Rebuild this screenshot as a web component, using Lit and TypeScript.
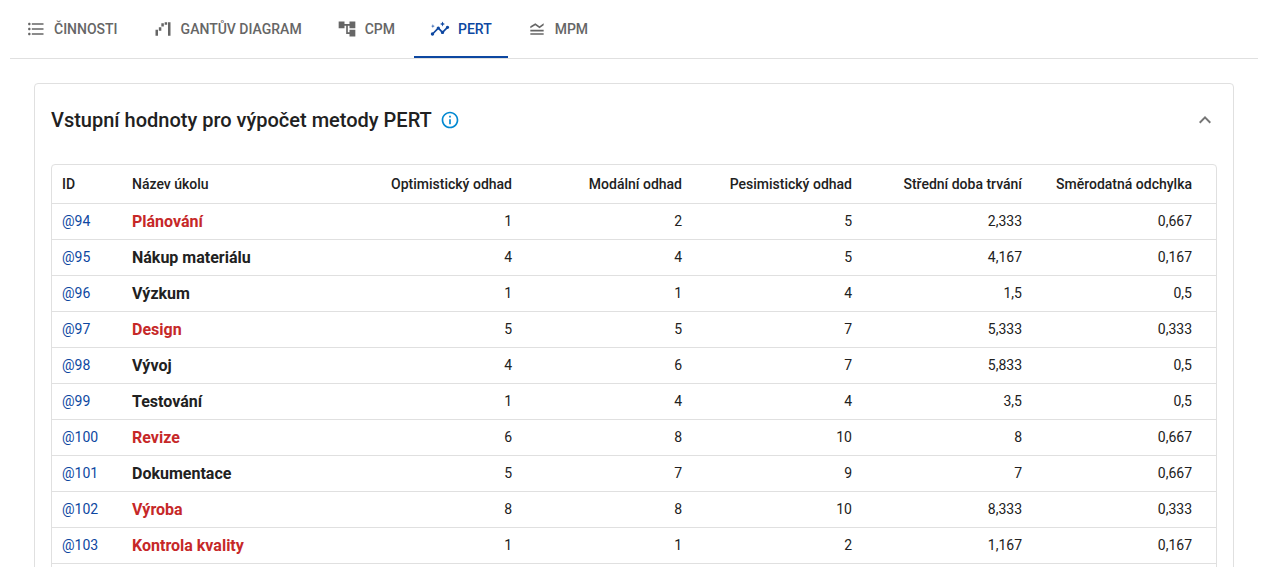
import { LitElement, html, css, svg } from "lit";
import { customElement, state } from "lit/decorators.js";

interface Task {
  id: number;
  name: string;
  critical: boolean;
  values: string[];
}

const task = (id: number, name: string, critical: boolean, ...values: string[]): Task => ({ id, name, critical, values });

const TASKS: Task[] = [
  task(94, "Plánování", true, "1", "2", "5", "2,333", "0,667"),
  task(95, "Nákup materiálu", false, "4", "4", "5", "4,167", "0,167"),
  task(96, "Výzkum", false, "1", "1", "4", "1,5", "0,5"),
  task(97, "Design", true, "5", "5", "7", "5,333", "0,333"),
  task(98, "Vývoj", false, "4", "6", "7", "5,833", "0,5"),
  task(99, "Testování", false, "1", "4", "4", "3,5", "0,5"),
  task(100, "Revize", true, "6", "8", "10", "8", "0,667"),
  task(101, "Dokumentace", false, "5", "7", "9", "7", "0,667"),
  task(102, "Výroba", true, "8", "8", "10", "8,333", "0,333"),
  task(103, "Kontrola kvality", true, "1", "1", "2", "1,167", "0,167"),
];

const COLUMNS = ["Optimistický odhad", "Modální odhad", "Pesimistický odhad", "Střední doba trvání", "Směrodatná odchylka"];

const TABS = [
  {
    label: "Činnosti",
    icon: svg`<path d="M4 10.5c-.83 0-1.5.67-1.5 1.5s.67 1.5 1.5 1.5 1.5-.67 1.5-1.5-.67-1.5-1.5-1.5zm0-6c-.83 0-1.5.67-1.5 1.5S3.17 7.5 4 7.5 5.5 6.83 5.5 6 4.83 4.5 4 4.5zm0 12c-.83 0-1.5.68-1.5 1.5s.68 1.5 1.5 1.5 1.5-.68 1.5-1.5-.67-1.5-1.5-1.5zM7 19h14v-2H7v2zm0-6h14v-2H7v2zm0-8v2h14V5H7z"/>`,
  },
  {
    label: "Gantův diagram",
    icon: svg`<path d="M18 4h3v16h-3V4zM3 13h3v7H3v-7zm11-9h3v3h-3V4zm-4 1h3v4h-3V5zm-3 5h3v4H7v-4z"/>`,
  },
  { label: "CPM", icon: svg`<path d="M22 11V3h-7v3H9V3H2v8h7V8h2v10h4v3h7v-8h-7v3h-2V8h2v3z"/>` },
  {
    label: "PERT",
    icon: svg`<path d="M21 8c-1.45 0-2.26 1.44-1.93 2.51l-3.55 3.56c-.3-.09-.74-.09-1.04 0l-2.55-2.55C12.27 10.45 11.46 9 10 9c-1.45 0-2.27 1.44-1.93 2.52l-4.56 4.55C2.44 15.74 1 16.55 1 18c0 1.1.9 2 2 2 1.45 0 2.26-1.44 1.93-2.51l4.55-4.56c.3.09.74.09 1.04 0l2.55 2.55C12.73 16.55 13.54 18 15 18c1.45 0 2.27-1.44 1.93-2.52l3.56-3.55c1.07.33 2.51-.48 2.51-1.93 0-1.1-.9-2-2-2z"/><path d="m15 9 .94-2.07L18 6l-2.06-.93L15 3l-.92 2.07L12 6l2.08.93zM3.5 11 4 9l2-.5L4 8l-.5-2L3 8l-2 .5L3 9z"/>`,
  },
  { label: "MPM", icon: svg`<path d="M20 15H4v-2h16v2zm0 2H4v2h16v-2zm-5-6 5-3.55V5l-5 3.55L10 5 4 8.66V11l5.92-3.61L15 11z"/>` },
];

@customElement("app-root")
export class AppRoot extends LitElement {
  static styles = css`
    :host {
      display: block;
      padding: 0 7px 0 10px;
      font: 14px/20px Roboto, "Liberation Sans", sans-serif;
      color: #212121;
      background: #fff;
    }
    * {
      box-sizing: border-box;
    }
    button {
      border: 0;
      background: none;
      font: inherit;
      color: inherit;
      cursor: pointer;
    }
    svg {
      display: block;
      flex: none;
      fill: currentColor;
    }
    .tabs {
      display: flex;
      gap: 3px;
      border-bottom: 1px solid #e0e0e0;
    }
    .tab {
      display: flex;
      align-items: center;
      gap: 8px;
      height: 58px;
      padding: 0 16px;
      border-bottom: 2px solid transparent;
      border-top: 2px solid transparent;
      font-weight: 500;
      text-transform: uppercase;
      color: #666;
    }
    .tab[aria-selected="true"] {
      color: #0d47a1;
      border-bottom-color: #0d47a1;
    }
    .card {
      margin: 24px;
      border: 1px solid #e0e0e0;
      border-radius: 4px;
      padding: 0 16px 16px;
    }
    .card-head {
      display: flex;
      align-items: center;
      gap: 8px;
      height: 72px;
      margin-bottom: 8px;
    }
    h2 {
      margin: 0;
      font-size: 20px;
      line-height: 32px;
      font-weight: 500;
    }
    .info {
      padding: 0;
      color: #0288d1;
    }
    .toggle {
      margin-left: auto;
      padding: 0;
      color: #757575;
    }
    .table-wrap {
      border: 1px solid #e0e0e0;
      border-radius: 4px;
    }
    table {
      width: 100%;
      table-layout: fixed;
      border-collapse: separate;
      border-spacing: 0;
    }
    .col-id {
      width: 70px;
    }
    .col-value {
      width: 170px;
    }
    .col-end {
      width: 14px;
    }
    th,
    td {
      height: 36px;
      padding: 0 10px 1px;
      text-align: right;
      white-space: nowrap;
      border-bottom: 1px solid #e0e0e0;
    }
    th {
      height: 39px;
      padding-bottom: 0;
      font-weight: 500;
    }
    tfoot td {
      border-bottom: 0;
    }
    .left {
      text-align: left;
    }
    .name {
      padding-bottom: 0;
      font-size: 16px;
      font-weight: 700;
    }
    .critical {
      color: #c62828;
    }
    a {
      color: #0d47a1;
      text-decoration: none;
    }
  `;

  @state() private active = 3;
  @state() private open = true;

  private icon(shape: unknown, size = 20) {
    return html`<svg width=${size} height=${size} viewBox="0 0 24 24" aria-hidden="true">${shape}</svg>`;
  }

  private renderTable() {
    return html`
      <div class="table-wrap">
        <table>
          <colgroup>
            <col class="col-id" />
            <col />
            ${COLUMNS.map(() => html`<col class="col-value" />`)}
            <col class="col-end" />
          </colgroup>
          <thead>
            <tr>
              <th class="left" scope="col">ID</th>
              <th class="left" scope="col">Název úkolu</th>
              ${COLUMNS.map((label) => html`<th scope="col">${label}</th>`)}
              <td></td>
            </tr>
          </thead>
          <tbody>
            ${TASKS.map(
              (t) => html`<tr>
                <td class="left"><a href="#${t.id}">@${t.id}</a></td>
                <td class="left name ${t.critical ? "critical" : ""}">${t.name}</td>
                ${t.values.map((v) => html`<td>${v}</td>`)}
                <td></td>
              </tr>`,
            )}
          </tbody>
          <tfoot>
            <tr>
              <td colspan="8"></td>
            </tr>
          </tfoot>
        </table>
      </div>
    `;
  }

  render() {
    return html`
      <div class="tabs" role="tablist">
        ${TABS.map(
          (tab, i) => html`<button class="tab" role="tab" aria-selected=${i === this.active} @click=${() => (this.active = i)}>
            ${this.icon(tab.icon)}${tab.label}
          </button>`,
        )}
      </div>
      <section class="card">
        <div class="card-head">
          <h2>Vstupní hodnoty pro výpočet metody PERT</h2>
          <button class="info" aria-label="Nápověda">
            ${this.icon(svg`<path d="M11 7h2v2h-2zm0 4h2v6h-2zm1-9C6.48 2 2 6.48 2 12s4.48 10 10 10 10-4.48 10-10S17.52 2 12 2zm0 18c-4.41 0-8-3.59-8-8s3.59-8 8-8 8 3.59 8 8-3.59 8-8 8z"/>`)}
          </button>
          <button class="toggle" aria-label="Sbalit" aria-expanded=${this.open} @click=${() => (this.open = !this.open)}>
            ${this.icon(
              this.open
                ? svg`<path d="m12 8-6 6 1.41 1.41L12 10.83l4.59 4.58L18 14z"/>`
                : svg`<path d="M16.59 8.59 12 13.17 7.41 8.59 6 10l6 6 6-6z"/>`,
              24,
            )}
          </button>
        </div>
        ${this.open ? this.renderTable() : ""}
      </section>
    `;
  }
}
